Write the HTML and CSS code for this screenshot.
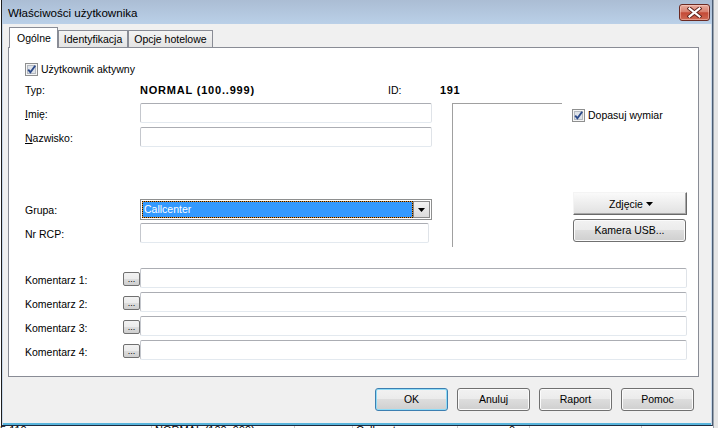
FILE: index.html
```html
<!DOCTYPE html>
<html lang="pl">
<head>
<meta charset="utf-8">
<title>Właściwości użytkownika</title>
<link rel="stylesheet" href="styles.css">
</head>
<body>
<div class="desk">
  <div class="desk-main">
    <div class="desk-row">
      <span class="dc c1">5 110</span>
      <span class="dc c2">NORMAL (100..999)</span>
      <span class="dc c3"></span>
      <span class="dc c4">Callcenter</span>
      <span class="dc c5">0</span>
      <span class="dc c6"></span>
      <span class="dc c7"></span>
    </div>
  </div>
  <div class="desk-scroll"></div>
</div>

<div class="window">
  <div class="titlebar">
    <span class="title">Właściwości użytkownika</span>
    <div class="close">
      <svg width="15" height="11" viewBox="0 0 15 11"><path d="M2.5 1.5 L12.5 9.5 M12.5 1.5 L2.5 9.5" stroke="#5b2019" stroke-width="4" stroke-linecap="square" fill="none"/><path d="M2.5 1.5 L12.5 9.5 M12.5 1.5 L2.5 9.5" stroke="#ffffff" stroke-width="2.2" stroke-linecap="square" fill="none"/></svg>
    </div>
  </div>
  <div class="client">
    <div class="tabs">
      <div class="tab active">Ogólne</div>
      <div class="tab">Identyfikacja</div>
      <div class="tab">Opcje hotelowe</div>
    </div>
    <div class="panel">
      <div class="check-row">
        <svg class="cb" width="13" height="13" viewBox="0 0 13 13"><rect x=".5" y=".5" width="12" height="12" fill="#f5f5f5" stroke="#8e8f8f"/><rect x="2.5" y="2.5" width="8" height="8" fill="#dfe3e9" stroke="#b4b9c0"/><path d="M3.2 6.6 L5.4 9.2 L10.2 2.8" stroke="#2c4a8a" stroke-width="1.9" fill="none"/></svg>
        <span>Użytkownik aktywny</span>
      </div>
      <div class="type-row">
        <span class="lbl">Typ:</span>
        <b class="val">NORMAL (100..999)</b>
        <span class="id-lbl">ID:</span>
        <b class="idv">191</b>
      </div>
      <div class="mid">
        <div class="fields">
          <div class="frow"><span class="lbl"><u>I</u>mię:</span><span class="input"></span></div>
          <div class="frow gap4"><span class="lbl"><u>N</u>azwisko:</span><span class="input"></span></div>
          <div class="frow grupa"><span class="lbl">Grupa:</span>
            <div class="combo">
              <span class="combo-sel">Callcenter</span>
              <span class="combo-btn"><svg width="7" height="4" viewBox="0 0 7 4"><path d="M0 0 H7 L3.5 4 Z" fill="#000"/></svg></span>
            </div>
          </div>
          <div class="frow gap3"><span class="lbl">Nr RCP:</span><span class="input short"></span></div>
        </div>
        <div class="photo"></div>
        <div class="side">
          <div class="check-row">
            <svg class="cb" width="13" height="13" viewBox="0 0 13 13"><rect x=".5" y=".5" width="12" height="12" fill="#f5f5f5" stroke="#8e8f8f"/><rect x="2.5" y="2.5" width="8" height="8" fill="#dfe3e9" stroke="#b4b9c0"/><path d="M3.2 6.6 L5.4 9.2 L10.2 2.8" stroke="#2c4a8a" stroke-width="1.9" fill="none"/></svg>
            <span>Dopasuj wymiar</span>
          </div>
          <div class="btn-classic">Zdjęcie<svg class="tri" width="7" height="4" viewBox="0 0 7 4"><path d="M0 0 H7 L3.5 4 Z" fill="#000"/></svg></div>
          <div class="btn kamera">Kamera USB...</div>
        </div>
      </div>
      <div class="comments">
        <div class="crow"><span class="clbl">Komentarz 1:</span><span class="dots">...</span><span class="input wide"></span></div>
        <div class="crow"><span class="clbl">Komentarz 2:</span><span class="dots">...</span><span class="input wide"></span></div>
        <div class="crow"><span class="clbl">Komentarz 3:</span><span class="dots">...</span><span class="input wide"></span></div>
        <div class="crow"><span class="clbl">Komentarz 4:</span><span class="dots">...</span><span class="input wide"></span></div>
      </div>
    </div>
    <div class="buttons">
      <div class="btn def">OK</div>
      <div class="btn">Anuluj</div>
      <div class="btn">Raport</div>
      <div class="btn">Pomoc</div>
    </div>
  </div>
</div>
</body>
</html>
```

FILE: styles.css
```css
* { box-sizing: border-box; margin: 0; padding: 0; }
html, body { width: 718px; height: 428px; overflow: hidden; }
body {
  background: #ffffff;
  font-family: "Liberation Sans", Arial, Helvetica, sans-serif;
  font-size: 10.5px;
  color: #000;
  position: relative;
}

/* background application */
.desk { display: flex; height: 428px; }
.desk-main { width: 713px; display: flex; flex-direction: column; justify-content: flex-end; }
.desk-row { display: flex; height: 5px; overflow: hidden; font-size: 11px; line-height: 13px; }
.dc { border-right: 1px solid #c9c9c9; padding: 1px 0 0 3px; white-space: nowrap; overflow: hidden; }
.c1 { width: 152px; padding-left: 0; }
.c2 { width: 143px; }
.c3 { width: 58px; }
.c4 { width: 105px; }
.c5 { width: 72px; text-align: right; padding-right: 14px; }
.c6 { width: 112px; }
.c7 { flex: 1; border-right: none; }
.desk-scroll { flex: 1; background: #e6e6e6; border-left: 1px solid #9aa3ad; }

/* window */
.window {
  position: absolute;
  left: 1px; top: 0;
  width: 712px; height: 426px;
  display: flex; flex-direction: column;
  background: #c9d9ea;
  border-left: 1px solid #1e1e1e;
  border-right: 1px solid #4c5d74;
  border-bottom: 1px solid #1c2b3f;
}
.titlebar {
  height: 24px; flex: none;
  display: flex; align-items: flex-start; justify-content: space-between;
  background: linear-gradient(#abbdd4, #bad0e8);
  padding-left: 6px;
}
.title { font-size: 11.6px; line-height: 15px; margin-top: 5px; color: #000; }
.close {
  width: 31px; height: 17px;
  margin: 4px 2px 0 0;
  border: 1px solid #6b2a22; border-radius: 3px;
  background: linear-gradient(#e8ad9f, #d8806f 45%, #c44a36 52%, #cf6a55);
  box-shadow: inset 0 0 0 1px rgba(255, 220, 210, .45);
  display: flex; align-items: center; justify-content: center;
}

.client {
  flex: 1;
  margin: 0 1px;
  background: #f0f0f0;
  border-bottom: 2px solid #58b4dc;
  display: flex; flex-direction: column;
}

/* tabs */
.tabs {
  display: flex; align-items: flex-end;
  height: 20px; margin: 3px 0 0 6px;
  position: relative; z-index: 1;
}
.tab {
  height: 17px;
  border: 1px solid #898c95; border-bottom: none;
  background: linear-gradient(#f3f3f3, #e4e4e4);
  padding: 2px 5px 0;
  line-height: 13px;
  white-space: nowrap;
}
.tab.active {
  height: 21px; margin-bottom: -1px;
  background: #fff;
  padding: 4px 6px 0 7px;
}

.panel {
  height: 330px;
  margin-left: 5px; width: 691px;
  border: 1px solid #898c95;
  background: #fff;
  padding: 15px 0 0 16px;
}

.check-row { display: flex; align-items: center; height: 13px; line-height: 13px; }
.cb { flex: none; margin-right: 3px; }

.type-row { display: flex; height: 13px; line-height: 13px; margin-top: 8px; }
.lbl { width: 115px; flex: none; }
.val { width: 248px; font-size: 11px; letter-spacing: .8px; }
.id-lbl { width: 52px; }
.idv { font-size: 11px; letter-spacing: .6px; }

.mid { display: flex; align-items: flex-start; margin-top: 6px; }
.fields { width: 407px; display: flex; flex-direction: column; }
.frow { display: flex; align-items: center; height: 20px; }
.frow.gap4 { margin-top: 4px; }
.frow.grupa { margin-top: 52px; height: 21px; }
.frow.gap3 { margin-top: 3px; }
.frow .lbl { padding-top: 1px; }

.input {
  display: block; height: 20px; width: 292px;
  border: 1px solid;
  border-color: #abadb3 #dfe3e8 #e3e9ef #c4c7cd;
  border-radius: 2px;
  background: #fff;
}
.input.short { width: 289px; }
.input.wide { width: 547px; }

.combo {
  width: 292px; height: 21px;
  border: 1px solid #8e8f8f;
  padding: 1px 1px 1px 1px;
  display: flex;
  background: #fff;
}
.combo-sel {
  flex: 1;
  border: 1px dotted #1a1208;
  background: linear-gradient(#3399ff, #3399ff) padding-box, linear-gradient(#e49030, #e49030) border-box;
  color: #fff;
  line-height: 15px;
  padding-left: 1px;
}
.combo-btn {
  width: 17px;
  border: 1px solid #8a8a8a;
  background: linear-gradient(#f2f2f2, #dcdcdc);
  display: flex; align-items: center; justify-content: center;
  padding-top: 1px;
}

.photo {
  width: 110px; height: 144px;
  margin-left: 20px;
  border-top: 1px solid #a0a0a0;
  border-left: 1px solid #a0a0a0;
}
.side { margin-left: 10px; width: 116px; display: flex; flex-direction: column; }
.side .check-row { margin-top: 6px; }
.side .check-row .cb { margin-right: 3px; }

.btn {
  height: 23px;
  border: 1px solid #707070; border-radius: 3px;
  background: linear-gradient(#f2f2f2 0%, #ebebeb 49%, #dddddd 50%, #cfcfcf 100%);
  box-shadow: inset 0 0 0 1px #fbfbfb;
  display: flex; align-items: center; justify-content: center;
  line-height: 13px;
}
.btn.def { border-color: #3c7fb1; box-shadow: inset 0 0 0 1px #8fdcf7; }

.btn-classic {
  height: 23px; width: 114px;
  margin: 70px 0 0 1px;
  border: 1px solid;
  border-color: #f4f4f4 #6a6a6a #6a6a6a #f4f4f4;
  box-shadow: inset -1px -1px 0 #a8a8a8;
  background: linear-gradient(#fafafa, #e1e1e1);
  display: flex; align-items: center; justify-content: center;
  padding-left: 2px;
}
.tri { margin-left: 3px; }
.kamera { width: 113px; margin: 4px 0 0 1px; }

.comments { margin-top: 21px; display: flex; flex-direction: column; gap: 4px; }
.crow { display: flex; align-items: flex-start; height: 20px; }
.clbl { width: 98px; line-height: 20px; padding-top: 2px; flex: none; }
.dots {
  width: 17px; height: 14px; margin-top: 4px; flex: none;
  border: 1px solid #707070; border-radius: 2px;
  background: linear-gradient(#f2f2f2, #ebebeb 49%, #dddddd 50%, #cfcfcf);
  font-size: 9px; line-height: 9px;
  display: flex; align-items: flex-end; justify-content: center;
  padding-bottom: 1px;
}

.buttons {
  display: flex; justify-content: flex-end; gap: 9px;
  margin-top: 11px; padding-right: 17px;
}
.buttons .btn { width: 73px; }
```
